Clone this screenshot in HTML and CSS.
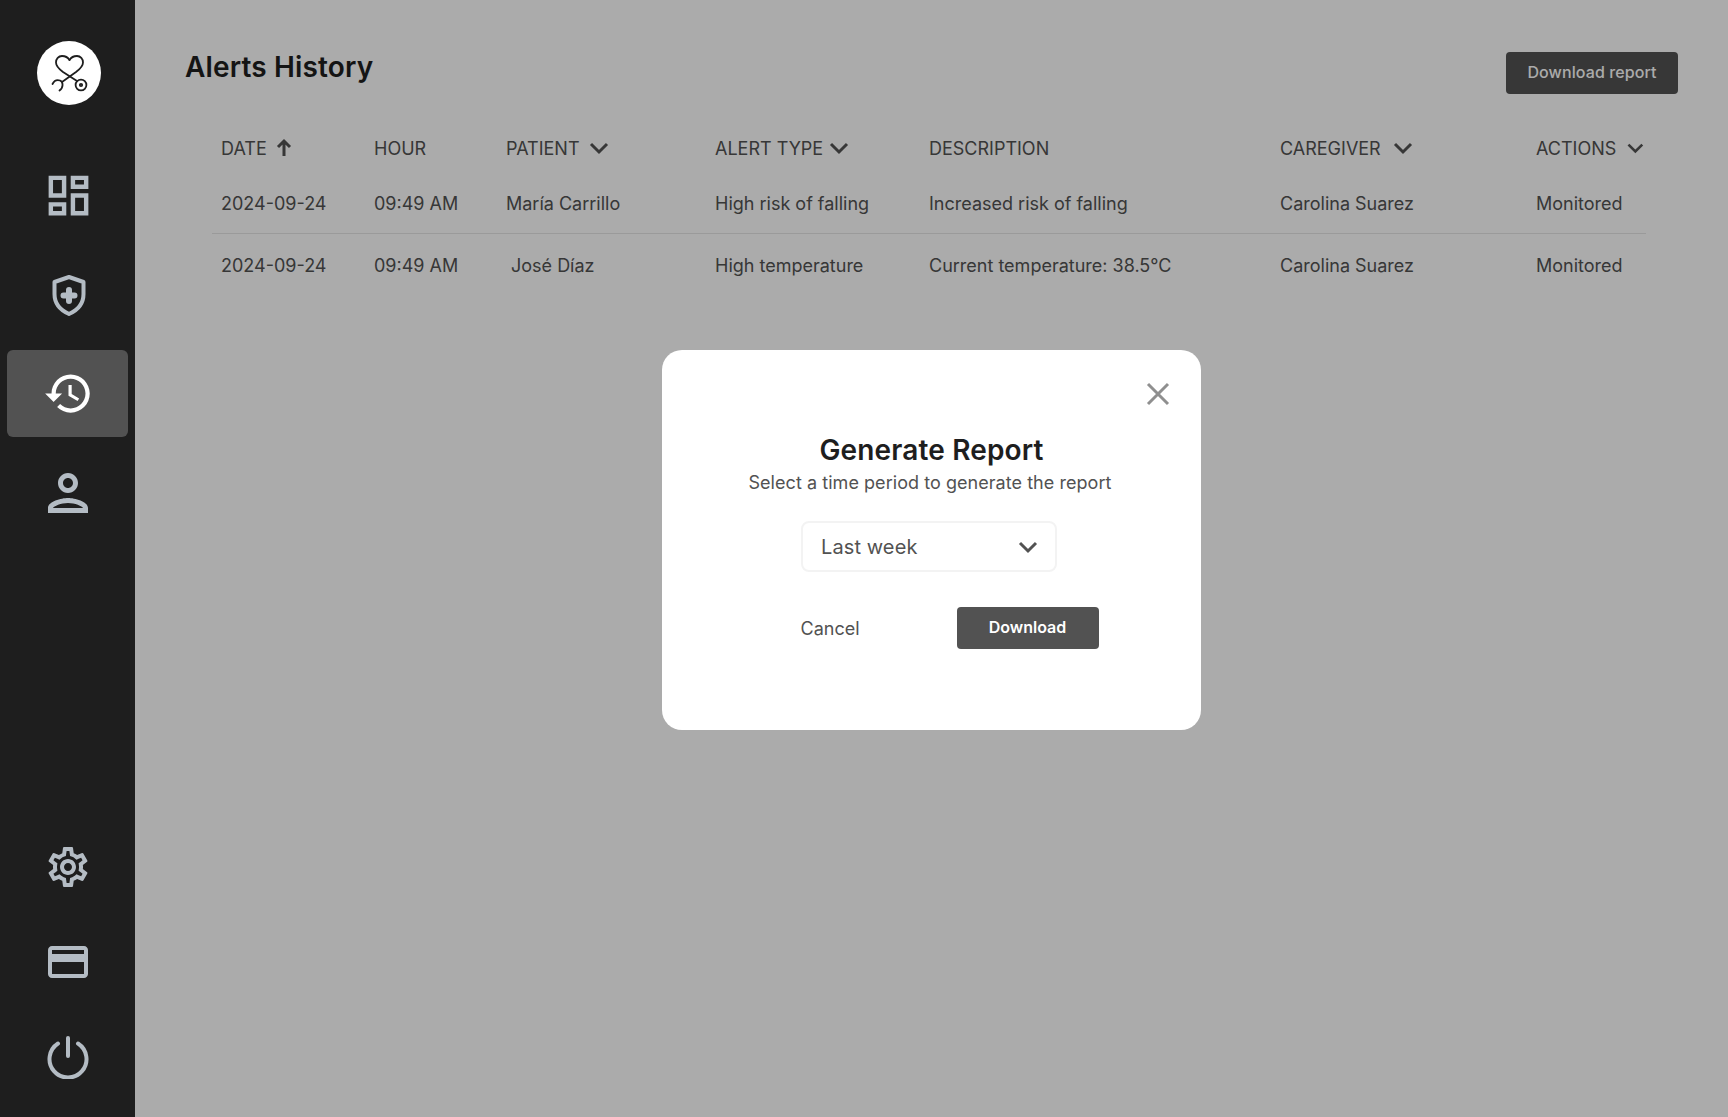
FILE: index.html
```html
<!DOCTYPE html>
<html lang="en">
<head>
  <meta charset="UTF-8" />
  <meta name="viewport" content="width=device-width, initial-scale=1" />
  <title>Alerts History</title>
  <link rel="stylesheet" href="styles.css">
</head>
<body>

  <aside class="sidebar">
    <div class="logo">
      <svg width="44" height="44" viewBox="0 0 44 44" fill="none" stroke="#1e1e1e" stroke-width="1.8" stroke-linecap="round" stroke-linejoin="round">
        <path d="M22.5 9 C24 6.5 27 5 30 5 C33.5 5 36 8 36 11.5 C36 15 33 18 29 21 L15 31" />
        <path d="M22.5 9 C21 6.5 18 5 15 5 C11.5 5 9 8 9 11.5 C9 15 12 18 16 21 L30 30" />
        <path d="M5.5 33 C7 30 10 28.5 13 29.5 C16.5 31 16.5 36.5 12.5 39.5" />
        <circle cx="34" cy="34" r="5.4" />
        <circle cx="34" cy="34" r="1.2" />
      </svg>
    </div>

    <nav class="nav">
      <a class="nav-item">
        <svg width="53" height="53" viewBox="0 0 24 24"><path d="M19 5v2h-4V5h4M9 5v6H5V5h4m10 8v6h-4v-6h4M9 17v2H5v-2h4M21 3h-8v6h8V3zM11 3H3v10h8V3zm10 8h-8v10h8V11zm-10 4H3v6h8v-6z"/></svg>
      </a>
      <a class="nav-item">
        <svg width="44" height="44" viewBox="0 0 44 44">
          <path class="line" d="M23 4 L37.5 9 V21 C37.5 30 32 37 23 41 C14 37 8.5 30 8.5 21 V9 Z" />
          <path class="line thick" d="M23 17 V28 M17.5 22.5 H28.5" />
        </svg>
      </a>
      <a class="nav-item active">
        <svg width="51" height="51" viewBox="0 0 24 24"><path d="M13 3c-4.97 0-9 4.03-9 9H1l3.89 3.89.07.14L9 12H6c0-3.87 3.13-7 7-7s7 3.13 7 7-3.13 7-7 7c-1.93 0-3.68-.79-4.94-2.06l-1.42 1.42C8.27 19.99 10.51 21 13 21c4.97 0 9-4.03 9-9s-4.03-9-9-9zm-1 5v5l4.28 2.54.72-1.21-3.5-2.08V8H12z"/></svg>
      </a>
      <a class="nav-item">
        <svg width="60" height="60" viewBox="0 0 24 24"><path d="M12 6c1.1 0 2 .9 2 2s-.9 2-2 2-2-.9-2-2 .9-2 2-2m0 10c2.7 0 5.8 1.29 6 2H6c.23-.72 3.31-2 6-2m0-12C9.79 4 8 5.79 8 8s1.79 4 4 4 4-1.79 4-4-1.79-4-4-4zm0 10c-2.67 0-8 1.34-8 4v2h16v-2c0-2.66-5.33-4-8-4z"/></svg>
      </a>
    </nav>

    <div class="nav-bottom">
      <a class="nav-item">
        <svg width="48" height="48" viewBox="0 0 24 24"><path d="M19.43 12.98c.04-.32.07-.64.07-.98 0-.34-.03-.66-.07-.98l2.11-1.65c.19-.15.24-.42.12-.64l-2-3.46c-.09-.16-.26-.25-.44-.25-.06 0-.12.01-.17.03l-2.49 1c-.52-.4-1.08-.73-1.69-.98l-.38-2.65C14.46 2.18 14.25 2 14 2h-4c-.25 0-.46.18-.49.42l-.38 2.65c-.61.25-1.17.59-1.69.98l-2.49-1c-.06-.02-.12-.03-.18-.03-.17 0-.34.09-.43.25l-2 3.46c-.13.22-.07.49.12.64l2.11 1.65c-.04.32-.07.65-.07.98 0 .33.03.66.07.98l-2.11 1.65c-.19.15-.24.42-.12.64l2 3.46c.09.16.26.25.44.25.06 0 .12-.01.17-.03l2.49-1c.52.4 1.08.73 1.69.98l.38 2.65c.03.24.24.42.49.42h4c.25 0 .46-.18.49-.42l.38-2.65c.61-.25 1.17-.59 1.69-.98l2.49 1c.06.02.12.03.18.03.17 0 .34-.09.43-.25l2-3.46c.12-.22.07-.49-.12-.64l-2.11-1.65zm-1.98-1.71c.04.31.05.52.05.73 0 .21-.02.43-.05.73l-.14 1.13.89.7 1.08.84-.7 1.21-1.27-.51-1.04-.42-.9.68c-.43.32-.84.56-1.25.73l-1.06.43-.16 1.13-.2 1.35h-1.4l-.19-1.35-.16-1.13-1.06-.43c-.43-.18-.83-.41-1.23-.71l-.91-.7-1.06.43-1.27.51-.7-1.21 1.08-.84.89-.7-.14-1.13c-.03-.31-.05-.54-.05-.74s.02-.43.05-.73l.14-1.13-.89-.7-1.08-.84.7-1.21 1.27.51 1.04.42.9-.68c.43-.32.84-.56 1.25-.73l1.06-.43.16-1.13.2-1.35h1.39l.19 1.35.16 1.13 1.06.43c.43.18.83.41 1.23.71l.91.7 1.06-.43 1.27-.51.7 1.21-1.07.85-.89.7.14 1.13zM12 8c-2.21 0-4 1.79-4 4s1.79 4 4 4 4-1.79 4-4-1.79-4-4-4zm0 6c-1.1 0-2-.9-2-2s.9-2 2-2 2 .9 2 2-.9 2-2 2z"/></svg>
      </a>
      <a class="nav-item">
        <svg width="48" height="48" viewBox="0 0 24 24"><path d="M20 4H4c-1.11 0-1.99.89-1.99 2L2 18c0 1.11.89 2 2 2h16c1.11 0 2-.89 2-2V6c0-1.11-.89-2-2-2zm0 14H4v-6h16v6zm0-10H4V6h16v2z"/></svg>
      </a>
      <a class="nav-item">
        <svg width="44" height="44" viewBox="0 0 44 44">
          <path class="line" d="M12 8.5 A18.5 18.5 0 1 0 32 8.5" />
          <path class="line" d="M22 3 V21" />
        </svg>
      </a>
    </div>
  </aside>

  <main class="content">
    <header class="page-header">
      <h1>Alerts History</h1>
      <button class="btn-report">Download report</button>
    </header>

    <table class="alerts">
      <thead>
        <tr>
          <th class="col-date"><span class="th-label">DATE <svg class="sort sort-date" width="24" height="24" viewBox="0 0 24 24"><path d="M12 20 V5 M6 11 L12 5 L18 11"/></svg></span></th>
          <th class="col-hour"><span class="th-label">HOUR</span></th>
          <th class="col-patient"><span class="th-label">PATIENT <svg class="sort sort-patient" width="24" height="24" viewBox="0 0 24 24"><path d="M4 8 L12 16 L20 8"/></svg></span></th>
          <th class="col-type"><span class="th-label">ALERT TYPE <svg class="sort sort-type" width="24" height="24" viewBox="0 0 24 24"><path d="M4 8 L12 16 L20 8"/></svg></span></th>
          <th class="col-desc"><span class="th-label">DESCRIPTION</span></th>
          <th class="col-caregiver"><span class="th-label">CAREGIVER <svg class="sort" width="24" height="24" viewBox="0 0 24 24"><path d="M4 8 L12 16 L20 8"/></svg></span></th>
          <th class="col-actions"><span class="th-label">ACTIONS <svg class="sort sort-actions" width="24" height="24" viewBox="0 0 24 24"><path d="M4 8 L12 16 L20 8"/></svg></span></th>
        </tr>
      </thead>
      <tbody>
        <tr>
          <td>2024-09-24</td>
          <td>09:49 AM</td>
          <td>María Carrillo</td>
          <td>High risk of falling</td>
          <td>Increased risk of falling</td>
          <td>Carolina Suarez</td>
          <td>Monitored</td>
        </tr>
        <tr>
          <td>2024-09-24</td>
          <td>09:49 AM</td>
          <td class="indent">José Díaz</td>
          <td>High temperature</td>
          <td>Current temperature: 38.5°C</td>
          <td>Carolina Suarez</td>
          <td>Monitored</td>
        </tr>
      </tbody>
    </table>
  </main>

  <div class="overlay">
    <section class="modal">
      <button class="modal-close" aria-label="Close">
        <svg width="24" height="24" viewBox="0 0 24 24"><path d="M2 2 L22 22 M22 2 L2 22"/></svg>
      </button>
      <h2>Generate Report</h2>
      <p>Select a time period to generate the report</p>
      <div class="select">
        <span>Last week</span>
        <svg width="24" height="24" viewBox="0 0 24 24"><path d="M4 8 L12 16 L20 8"/></svg>
      </div>
      <div class="modal-actions">
        <button class="btn-cancel">Cancel</button>
        <button class="btn-download">Download</button>
      </div>
    </section>
  </div>

</body>
</html>
```

FILE: styles.css
```css
/* Reset and base */
* {
  box-sizing: border-box;
}
body {
  margin: 0;
  height: 100vh;
  display: flex;
  font-family: Inter, 'Noto Sans', sans-serif;
  background: #fff;
  color: #525252;
  overflow: hidden;
}
button {
  font-family: inherit;
  border: none;
  background: none;
  padding: 0;
}

/* Sidebar */
.sidebar {
  position: relative;
  z-index: 2;
  flex: 0 0 135px;
  display: flex;
  flex-direction: column;
  background: #1e1e1e;
  padding: 41px 7px 17px;
}
.logo {
  align-self: center;
  width: 64px;
  height: 64px;
  margin-left: 3px;
  border-radius: 50%;
  background: #fff;
  display: flex;
  align-items: center;
  justify-content: center;
}
.nav {
  display: flex;
  flex-direction: column;
  gap: 12px;
  margin-top: 47px;
}
.nav-bottom {
  display: flex;
  flex-direction: column;
  gap: 8px;
  margin-top: auto;
}
.nav-item {
  height: 87px;
  padding-left: 1px;
  border-radius: 6px;
  display: flex;
  align-items: center;
  justify-content: center;
  fill: #b4bcc4;
}
.nav-item .line {
  fill: none;
  stroke: #b4bcc4;
  stroke-width: 4;
  stroke-linecap: round;
  stroke-linejoin: round;
}
.nav-item .line.thick {
  stroke-width: 6;
}
.nav-item.active {
  background: #525252;
  fill: #fff;
}

/* Main content */
.content {
  flex: 1;
  padding: 0 50px;
  background: #fff;
}
.page-header {
  display: flex;
  justify-content: space-between;
  align-items: flex-start;
  padding-top: 52px;
}
h1 {
  margin: 0;
  font-size: 28px;
  line-height: 30px;
  font-weight: 600;
  letter-spacing: 0.15px;
  color: #1e1e1e;
}
.btn-report {
  width: 172px;
  height: 42px;
  padding-bottom: 2px;
  border-radius: 4px;
  background: #525252;
  color: #fff;
  font-size: 16px;
  font-weight: 500;
  letter-spacing: 0.1px;
}

/* Table */
.alerts {
  width: 1434px;
  margin: 27px 0 0 27px;
  border-collapse: collapse;
  table-layout: fixed;
  font-size: 18px;
}
.alerts th {
  height: 54px;
  padding: 0 0 0 9px;
  text-align: left;
  font-weight: 400;
  white-space: nowrap;
}
.th-label {
  display: flex;
  align-items: center;
}
.alerts td {
  height: 60px;
  padding: 4px 0 0 9px;
  white-space: nowrap;
}
.alerts tbody tr:first-child td {
  height: 58px;
  padding-top: 0;
  border-bottom: 1px solid #e6e6e6;
}
.alerts td.indent {
  padding-left: 14px;
}
.col-date { width: 153px; }
.col-hour { width: 132px; }
.col-patient { width: 209px; }
.col-type { width: 214px; }
.col-desc { width: 351px; }
.col-caregiver { width: 256px; }
.sort {
  margin-left: 10px;
  fill: none;
  stroke: #525252;
  stroke-width: 3;
}
.sort-date { margin-left: 5px; }
.sort-patient { margin-left: 7px; }
.sort-type { margin-left: 4px; }
.sort-actions { margin-left: 9px; }

/* Modal */
.overlay {
  position: fixed;
  inset: 0;
  z-index: 1;
  background: rgba(0, 0, 0, 0.33);
  padding: 350px 0 0 662px;
}
.modal {
  position: relative;
  width: 539px;
  height: 380px;
  padding-top: 80px;
  border-radius: 20px;
  background: #fff;
  display: flex;
  flex-direction: column;
  align-items: center;
}
.modal-close {
  position: absolute;
  top: 32px;
  right: 31px;
  width: 24px;
  height: 24px;
}
.modal-close svg {
  fill: none;
  stroke: #8f8f8f;
  stroke-width: 3;
}
h2 {
  margin: 0;
  font-size: 28px;
  line-height: 40px;
  font-weight: 600;
  letter-spacing: 0.15px;
  color: #1e1e1e;
}
.modal p {
  margin: 0 0 0 -3px;
  font-size: 18px;
  line-height: 25px;
  letter-spacing: 0.05px;
}
.select {
  width: 256px;
  height: 51px;
  margin: 26px 5px 0 0;
  padding: 0 15px 0 18px;
  border: 2px solid #f3f3f3;
  border-radius: 8px;
  display: flex;
  align-items: center;
  justify-content: space-between;
  font-size: 20px;
  letter-spacing: 0.1px;
}
.select svg {
  fill: none;
  stroke: #525252;
  stroke-width: 3;
}
.modal-actions {
  display: flex;
  align-items: center;
  width: 298px;
  margin: 35px 0 0 36px;
  justify-content: space-between;
}
.btn-cancel {
  font-size: 18px;
  color: #525252;
}
.btn-download {
  width: 142px;
  height: 42px;
  padding-bottom: 2px;
  border-radius: 4px;
  background: #525252;
  color: #fff;
  font-size: 16px;
  font-weight: 600;
}
```
